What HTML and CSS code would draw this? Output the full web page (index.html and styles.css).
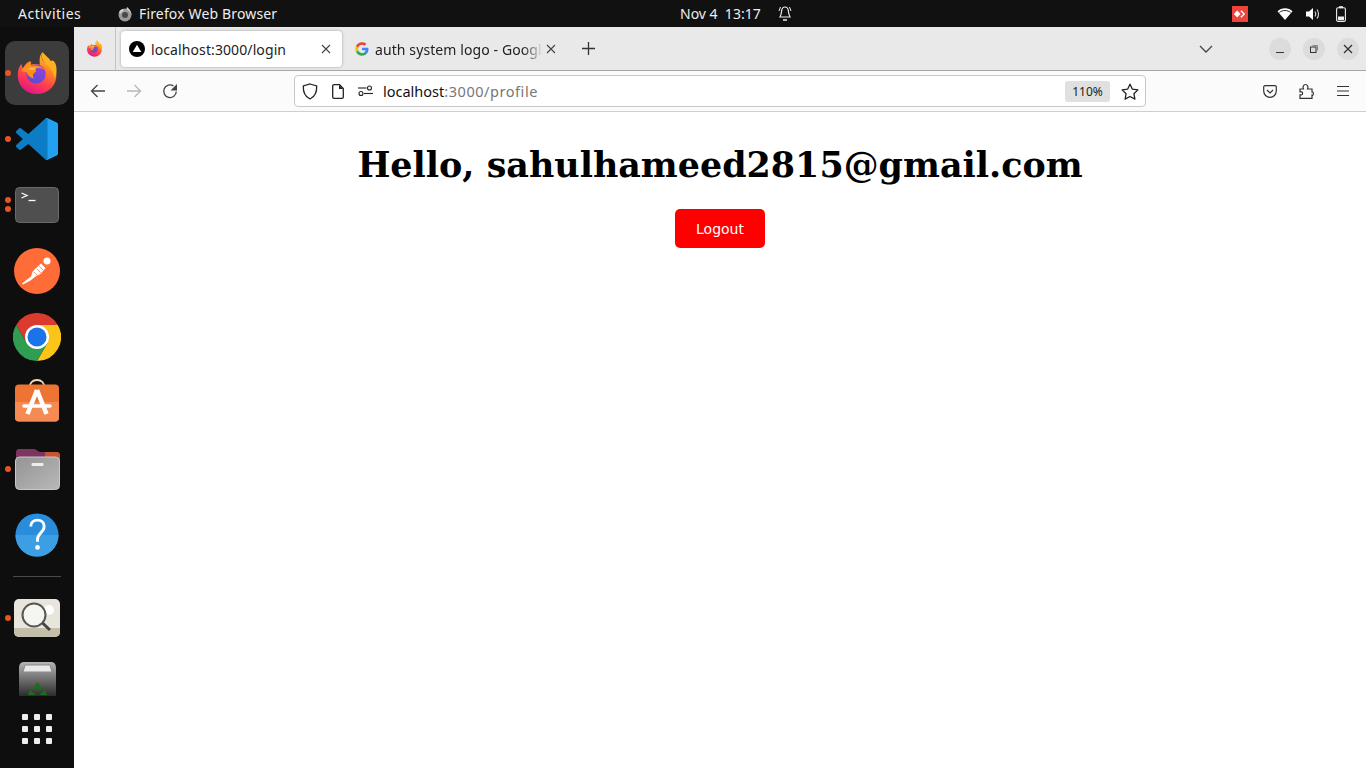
FILE: index.html
```html
<!DOCTYPE html>
<html>
  <head>
    <title>localhost:3000/profile</title>
    <link rel="stylesheet" href="styles.css">
  </head>

  <body>
    <svg class="defs" width="0" height="0">
      <defs>
        <linearGradient id="fxBase" x1="0.8" y1="0" x2="0.35" y2="1">
          <stop offset="0" stop-color="#ffd33a"/>
          <stop offset="0.35" stop-color="#ff8a1f"/>
          <stop offset="0.7" stop-color="#ff3d50"/>
          <stop offset="1" stop-color="#e31587"/>
        </linearGradient>
        <linearGradient id="fxPurple" x1="0.7" y1="0" x2="0.3" y2="1">
          <stop offset="0" stop-color="#9a3fe0"/>
          <stop offset="1" stop-color="#5b4bd0"/>
        </linearGradient>
        <symbol id="firefox" viewBox="0 0 48 48">
          <path fill="url(#fxBase)" d="M30 1c-2 5-1 9 3 12-1-1-2-1-3-2 0 0 2 1 3 2 3 1 5 0 6-1 5 5 7 11 6 17-1 10-10 18-21 18C12 47 3 38 3 27c0-5 1-9 4-13 0 2 1 4 2 5 1-3 4-7 8-8-1 2-1 3 0 4 3-1 7-1 10 0C27 10 26 6 30 1z"/>
          <path fill="#ffb01f" d="M30 1c-2 6 0 10 5 14 5 5 8 10 8 15 2-4 3-8 2-13-1-5-3-8-6-6-1-3-6-6-9-10z"/>
          <circle cx="23" cy="25" r="10.500" fill="url(#fxPurple)"/>
          <path fill="#ff8f1f" d="M7 22c2-5 8-10 11-10-1 2-1 3 0 4 6-1 12 1 15 5-4-3-9-3-11-1 2 2 1 3-1 4-2 1-2 4 0 6-5-1-8-4-8-7-2 0-4-1-6-1z"/>
          <path fill="#ffc23a" d="M13 20c3-2 6-3 10-1l-3 2c-2-1-4-1-7-1z"/>
        </symbol>
      </defs>
    </svg>

    <header class="topbar">
      <div class="top-left">
        <span class="activities">Activities</span>
        <span class="app-name">
          <svg class="top-fx" width="16" height="16" viewBox="0 0 16 16">
            <circle cx="8" cy="9" r="6.500" fill="#9b9b9b"/>
            <circle cx="8" cy="9" r="3" fill="#4a4a4a"/>
            <path fill="#d6d6d6" d="M10 1c-1 2 0 3 2 4 1 1 3 3 2 6 1-3 0-7-4-10zM2 6c1-2 3-3 4-3 0 1 0 1 1 2-2 0-3 1-3 3z"/>
          </svg>
          Firefox Web Browser
        </span>
      </div>
      <div class="clock">
        <span>Nov 4&nbsp;&nbsp;13:17</span>
        <svg class="bell" width="16" height="17" viewBox="0 0 16 17" fill="none" stroke="#eee" stroke-width="1.200">
          <path d="M8 2c-2.500 0-3.200 2-3.400 4-.2 3-.8 4.500-1.600 6h10c-.8-1.500-1.400-3-1.600-6C11.200 4 10.500 2 8 2z"/>
          <path d="M3.500 2 2 6M12.500 2 14 6" stroke-width="1"/>
          <path d="M6 15h4" stroke-width="1.500"/>
        </svg>
      </div>
      <div class="tray">
        <svg class="anydesk" width="16" height="16" viewBox="0 0 16 16">
          <rect width="16" height="16" fill="#ef443b"/>
          <path fill="#fff" d="M5.200 4.600 8.600 8 5.200 11.400 1.800 8z"/>
          <path fill="#fff" d="M9.400 4.200 13.200 8 9.400 11.800 8.400 10.800 11.200 8 8.400 5.200z"/>
        </svg>
        <svg class="wifi" width="16" height="14" viewBox="0 0 16 14">
          <path fill="#fff" d="M8 13 .5 4.200C2.500 2.400 5 1.200 8 1.200s5.500 1.200 7.500 3z"/>
          <path fill="none" stroke="#111" stroke-width=".9" d="M2.400 5.400C4 4.200 5.800 3.500 8 3.500s4 .7 5.600 1.900"/>
        </svg>
        <svg class="vol" width="16" height="16" viewBox="0 0 16 16">
          <path fill="#fff" d="M1 5.500h3L8 2v12l-4-3.500H1z"/>
          <path fill="none" stroke="#ddd" stroke-width="1.100" d="M10 5.500c1 1.500 1 3.500 0 5M12 3.500c2 2.500 2 6.500 0 9"/>
        </svg>
        <svg class="batt" width="10" height="16" viewBox="0 0 10 16">
          <rect x="3" y=".2" width="4" height="2" fill="#eee"/>
          <rect x=".6" y="1.700" width="8.800" height="13.700" rx="1.500" fill="none" stroke="#eee" stroke-width="1.100"/>
          <rect x="2" y="10.500" width="6" height="3.600" fill="#eee"/>
        </svg>
      </div>
    </header>

    <div class="desktop">
      <nav class="dock">
        <div class="dock-item active">
          <i class="dot"></i>
          <svg width="44" height="44"><use href="#firefox"/></svg>
        </div>

        <div class="dock-item">
          <i class="dot"></i>
          <svg width="42" height="42" viewBox="0 0 100 100">
            <path fill="#0c7dc4" d="M70.900 99.300a6.200 6.200 0 0 0 5-.2l20.600-9.900a6.300 6.300 0 0 0 3.500-5.600V16.400a6.300 6.300 0 0 0-3.500-5.600L75.900.9a6.200 6.200 0 0 0-7.100 1.200L29.400 38 12.200 25a4.200 4.200 0 0 0-5.300.2l-5.500 5a4.200 4.200 0 0 0 0 6.200L16.300 50 1.400 63.600a4.200 4.200 0 0 0 0 6.200l5.500 5a4.200 4.200 0 0 0 5.300.2l17.200-13 39.400 35.900a6.200 6.200 0 0 0 2.100 1.400zM75 27.300 45.100 50 75 72.700z"/>
            <path fill="#22a0f2" d="M68.800 2.100a6.200 6.200 0 0 1 7.100-1.200l20.600 9.900a6.300 6.300 0 0 1 3.500 5.600v67.200a6.300 6.300 0 0 1-3.500 5.600l-20.600 9.900a6.200 6.200 0 0 1-7.100-1.200c2.300 2.300 6.200.7 6.200-2.600V4.700c0-3.300-3.900-4.900-6.200-2.600z"/>
          </svg>
        </div>

        <div class="dock-item">
          <i class="dot dot-a"></i>
          <i class="dot dot-b"></i>
          <svg width="44" height="36" viewBox="0 0 44 36">
            <rect x=".5" y=".5" width="43" height="35" rx="4" fill="#4f4f4f" stroke="#6a6a6a"/>
            <path d="M6.500 6 12 8.500 6.500 11" fill="none" stroke="#fff" stroke-width="1.300"/>
            <path d="M13.500 13.500h7" stroke="#fff" stroke-width="1.300"/>
          </svg>
        </div>

        <div class="dock-item">
          <svg width="46" height="46" viewBox="0 0 46 46">
            <circle cx="23" cy="23" r="23" fill="#ff6c37"/>
            <circle cx="33" cy="13" r="3.500" fill="#fff"/>
            <path fill="#fff" d="M9 36.500l-1-1 9-7 1.500-5L27 15.500l4.500 4.500-5 6-5 2.500-5 4z"/>
            <path d="M20 24l4 4M23 21l4 4M25 18l4 4" stroke="#ff6c37" stroke-width=".7"/>
          </svg>
        </div>

        <div class="dock-item">
          <svg width="48" height="48" viewBox="0 0 48 48">
            <path fill="#db3a2f" d="M24 12h20.800A24 24 0 0 0 3.200 12l10.400 18z"/>
            <path fill="#fcc419" d="M24 12h20.800A24 24 0 0 1 24 48l10.400-18z"/>
            <path fill="#2f9e50" d="M3.200 12A24 24 0 0 0 24 48l10.400-18H13.600z"/>
            <circle cx="24" cy="24" r="12" fill="#fff"/>
            <circle cx="24" cy="24" r="9.500" fill="#1a73e8"/>
          </svg>
        </div>

        <div class="dock-item">
          <svg width="44" height="48" viewBox="0 0 44 48">
            <path d="M14.500 9c0-5 3-8 7.500-8s7.500 3 7.500 8" fill="none" stroke="#f3d9b0" stroke-width="1.800"/>
            <rect y="5.500" width="44" height="37" rx="4" fill="#ee7434"/>
            <path d="M0 23h44v15.500a4 4 0 0 1-4 4H4a4 4 0 0 1-4-4z" fill="#f58a52"/>
            <path d="M22 11 12.500 35M22 11l9.500 24" stroke="#fff" stroke-width="4.500" fill="none"/>
            <path d="M9 27h26" stroke="#fff" stroke-width="3.500" stroke-linecap="round"/>
          </svg>
        </div>

        <div class="dock-item">
          <i class="dot"></i>
          <svg width="45" height="41" viewBox="0 0 45 41">
            <defs>
              <linearGradient id="filesBody" x1="0" y1="0" x2="1" y2="1">
                <stop offset="0" stop-color="#949494"/>
                <stop offset="1" stop-color="#b8b8b8"/>
              </linearGradient>
            </defs>
            <path fill="#7d3560" d="M1 4c0-3 1-4 3-4h15c3 0 3 3 7 3h15c3 0 4 1 4 4v9H1z"/>
            <path fill="#c9552f" d="M30 3h11c3 0 4 1 4 4v9H30z"/>
            <rect x=".5" y="8" width="44" height="32.500" rx="4" fill="url(#filesBody)" stroke="#c9c9c9"/>
            <rect x="16.500" y="14" width="12" height="3" rx="1" fill="#eee"/>
          </svg>
        </div>

        <div class="dock-item">
          <svg width="44" height="44" viewBox="0 0 46 46">
            <circle cx="23" cy="23" r="22.500" fill="#2a8ddc"/>
            <path d="M.5 23a22.500 22.500 0 0 0 45 0z" fill="#3c9fe4"/>
            <path d="M16.500 14c0-4 3-6.500 7-6.500s7 2.500 7 6.500c0 6-7 7-7 14v2" fill="none" stroke="#fff" stroke-width="3"/>
            <circle cx="23.500" cy="36" r="2.500" fill="#fff"/>
          </svg>
        </div>

        <hr class="dock-sep">

        <div class="dock-item">
          <i class="dot"></i>
          <svg width="46" height="38" viewBox="0 0 46 38">
            <rect width="46" height="38" rx="5" fill="#e8e6dc"/>
            <path d="M0 29h46v4a5 5 0 0 1-5 5H5a5 5 0 0 1-5-5z" fill="#c4bfa8"/>
            <circle cx="35" cy="11" r="5" fill="#fff"/>
            <circle cx="20" cy="16" r="11.500" fill="#f5f5f2" stroke="#555" stroke-width="2"/>
            <path d="M28.500 24 36 31" stroke="#444" stroke-width="3"/>
          </svg>
        </div>

        <div class="dock-item dock-trash">
          <svg width="37" height="34" viewBox="0 0 37 34">
            <defs>
              <linearGradient id="trashBody" x1="0" y1="0" x2="0" y2="1">
                <stop offset="0" stop-color="#b5b5b5"/>
                <stop offset="1" stop-color="#2c2c2c"/>
              </linearGradient>
            </defs>
            <path d="M0 6c0-4 2-6 5-6h27c3 0 5 2 5 6v28H0z" fill="url(#trashBody)"/>
            <path d="M6 3h25l2 7H4z" fill="#e8e8e8" stroke="#8a8a8a"/>
            <path d="M18.500 20l-5 7h10zM11 28l-2 5h8zM26 28l2 5h-8z" fill="#1f6b1f"/>
          </svg>
        </div>

        <div class="app-grid">
          <i></i><i></i><i></i>
          <i></i><i></i><i></i>
          <i></i><i></i><i></i>
        </div>
      </nav>

      <div class="browser">
        <div class="tabbar">
          <div class="fx-view">
            <svg width="17" height="17"><use href="#firefox"/></svg>
          </div>

          <div class="tab tab-active">
            <svg class="favicon" width="16" height="16" viewBox="0 0 16 16">
              <circle cx="8" cy="8" r="8" fill="#000"/>
              <path d="M8 3.800 12.300 11H3.700z" fill="#fff"/>
            </svg>
            <span class="tab-title">localhost:3000/login</span>
            <svg class="tab-close" width="10" height="10" viewBox="0 0 10 10">
              <path d="M1 1l8 8M9 1l-8 8" stroke="#444" stroke-width="1.100"/>
            </svg>
          </div>

          <div class="tab tab-other">
            <svg class="favicon" width="14" height="14" viewBox="0 0 48 48">
              <path fill="#4285f4" d="M46 24.500c0-1.600-.1-3.100-.4-4.500H24v8.500h12.400c-.5 2.900-2.100 5.300-4.600 6.900v5.700h7.400c4.300-4 6.800-9.900 6.800-16.600z"/>
              <path fill="#34a853" d="M24 47c6.200 0 11.400-2 15.200-5.600l-7.400-5.700c-2 1.400-4.700 2.200-7.800 2.200-6 0-11.100-4-12.900-9.500H3.500v5.900C7.300 41.800 15 47 24 47z"/>
              <path fill="#fbbc05" d="M11.100 28.900c-.5-1.400-.7-3-.7-4.900s.3-3.400.7-4.900v-5.900H3.500C2 16.300 1 20 1 24s1 7.700 2.500 10.800z"/>
              <path fill="#ea4335" d="M24 9.600c3.400 0 6.400 1.200 8.800 3.400l6.600-6.600C35.400 2.800 30.200 1 24 1 15 1 7.300 6.200 3.500 13.200l7.600 5.900C12.900 13.600 18 9.600 24 9.600z"/>
            </svg>
            <span class="tab-title tab-fade">auth system logo - Google Search</span>
            <svg class="tab-close" width="10" height="10" viewBox="0 0 10 10">
              <path d="M1 1l8 8M9 1l-8 8" stroke="#444" stroke-width="1.100"/>
            </svg>
          </div>

          <svg class="new-tab" width="13" height="13" viewBox="0 0 13 13">
            <path d="M6.500 0v13M0 6.500h13" stroke="#333" stroke-width="1.300"/>
          </svg>

          <svg class="tab-list" width="14" height="8" viewBox="0 0 14 8" fill="none">
            <path d="M1 1l6 6 6-6" stroke="#444" stroke-width="1.300"/>
          </svg>

          <div class="win-btns">
            <span class="win-btn">
              <svg width="10" height="10" viewBox="0 0 10 10"><path d="M1 8.500h8" stroke="#333" stroke-width="1"/></svg>
            </span>
            <span class="win-btn">
              <svg width="10" height="10" viewBox="0 0 10 10" fill="none" stroke="#333">
                <rect x="1.500" y="3" width="5.500" height="5.500"/>
                <path d="M3.500 1.500h5v5" stroke="#888"/>
              </svg>
            </span>
            <span class="win-btn">
              <svg width="10" height="10" viewBox="0 0 10 10"><path d="M1 1l8 8M9 1l-8 8" stroke="#333" stroke-width="1.300"/></svg>
            </span>
          </div>
        </div>

        <div class="toolbar">
          <svg class="nav-back" width="16" height="14" viewBox="0 0 16 14" fill="none" stroke="#444" stroke-width="1.300">
            <path d="M15 7H1.500M7.500 1 1.500 7l6 6"/>
          </svg>
          <svg class="nav-fwd" width="16" height="14" viewBox="0 0 16 14" fill="none" stroke="#b8b8b8" stroke-width="1.300">
            <path d="M1 7h13.500M8.500 1l6 6-6 6"/>
          </svg>
          <svg class="nav-reload" width="16" height="16" viewBox="0 0 16 16" fill="none" stroke="#444" stroke-width="1.300">
            <path d="M14.300 8.500A6.300 6.300 0 1 1 11.500 3"/>
            <path d="M15 1v6.500H8.500z" fill="#444" stroke="none"/>
          </svg>

          <div class="urlbar">
            <svg class="url-shield" width="16" height="17" viewBox="0 0 16 17" fill="none" stroke="#222" stroke-width="1.300">
              <path d="M8 1 14.700 3c.3 6.500-1.500 10.500-6.700 13C2.800 13.500 1 9.500 1.300 3z"/>
            </svg>
            <svg class="url-page" width="12" height="15" viewBox="0 0 12 15" fill="none" stroke="#222" stroke-width="1.300">
              <path d="M2 .7h5.500l3.800 3.800V13a1.300 1.300 0 0 1-1.300 1.300H2A1.300 1.300 0 0 1 .7 13V2A1.300 1.300 0 0 1 2 .7z"/>
              <path d="M7 1v4h4" fill="#222" stroke="none"/>
            </svg>
            <svg class="url-perm" width="15" height="12" viewBox="0 0 15 12" fill="none" stroke="#222" stroke-width="1.100">
              <circle cx="11.500" cy="3" r="2"/>
              <path d="M0 3h8.500"/>
              <circle cx="3" cy="8.500" r="2"/>
              <path d="M6 8.500h9"/>
            </svg>
            <span class="url-text">localhost<span class="url-rest">:3000/profile</span></span>
            <span class="zoom-pill">110%</span>
            <svg class="url-star" width="18" height="17" viewBox="0 0 18 17" fill="none" stroke="#222" stroke-width="1.300">
              <path d="M9 1.200l2.400 5 5.500.7-4 3.800 1 5.400L9 13.500l-4.900 2.600 1-5.400-4-3.800 5.500-.7z" stroke-linejoin="round"/>
            </svg>
          </div>

          <div class="tool-btns">
            <svg width="14" height="13" viewBox="0 0 14 13" fill="none" stroke="#333" stroke-width="1.200">
              <path d="M2 .7h10A1.300 1.300 0 0 1 13.300 2v4a6.300 6.300 0 0 1-12.600 0V2A1.300 1.300 0 0 1 2 .7z"/>
              <path d="M4 5l3 3 3-3"/>
            </svg>
            <svg width="15" height="16" viewBox="0 0 15 16" fill="none" stroke="#333" stroke-width="1.200">
              <path d="M1 6h3.500c-1-2 0-4.500 2-4.500S9.500 4 8.500 6H13v3c1.500-.5 1.500 2 1 3s-1 .5-1 .5v2.800H1v-3.500h1.500c1.500 0 1.500-3 0-3H1z"/>
            </svg>
            <svg width="14" height="12" viewBox="0 0 14 12" stroke="#333" stroke-width="1.200">
              <path d="M1 1.500h12M1 6h12M1 10.500h12"/>
            </svg>
          </div>
        </div>

        <main class="page">
          <h1>Hello, sahulhameed2815@gmail.com</h1>
          <button class="logout">Logout</button>
        </main>
      </div>
    </div>
  </body>
</html>
```

FILE: styles.css
```css
html,
body {
  height: 100%;
}
body {
  margin: 0;
  display: flex;
  flex-direction: column;
  overflow: hidden;
  font-family: "Noto Sans", sans-serif;
  background: white;
}
svg {
  display: block;
  flex: none;
}
.defs {
  position: absolute;
}

/* gnome top bar */
.topbar {
  height: 27px;
  flex: none;
  display: flex;
  align-items: center;
  background: #111;
  color: #eee;
  font-size: 14px;
}
.top-left {
  width: 680px;
  flex: none;
  display: flex;
  align-items: center;
}
.activities {
  margin-left: 18px;
  width: 99px;
  letter-spacing: 0.5px;
}
.app-name {
  display: flex;
  align-items: center;
  gap: 6px;
  letter-spacing: 0.15px;
}
.clock {
  display: flex;
  align-items: center;
  gap: 16px;
}
.tray {
  margin-left: auto;
  display: flex;
  align-items: center;
  margin-right: 20px;
}
.anydesk {
  margin-right: 29px;
}
.wifi {
  margin-right: 12px;
}
.vol {
  margin-right: 15px;
}

.desktop {
  flex: 1;
  display: flex;
  min-height: 0;
}

/* dock */
.dock {
  width: 74px;
  flex: none;
  padding-top: 13px;
  box-sizing: border-box;
  background: #0e0e0e;
  display: flex;
  flex-direction: column;
  align-items: center;
}
.dock-item {
  position: relative;
  width: 64px;
  height: 66px;
  flex: none;
  display: flex;
  align-items: center;
  justify-content: center;
}
.dock-item.active::before {
  content: "";
  position: absolute;
  inset: 1px 0;
  border-radius: 10px;
  background: #3c3c3c;
}
.dock-item svg {
  position: relative;
}
.dot {
  position: absolute;
  left: 0;
  top: 30px;
  width: 6px;
  height: 6px;
  border-radius: 50%;
  background: #e95420;
}
.dot-a {
  top: 25px;
}
.dot-b {
  top: 34px;
}
.dock-sep {
  width: 48px;
  margin: 8px 0;
  border: 0;
  border-top: 1px solid #4a4a4a;
}
.dock-trash {
  height: 56px;
}
.app-grid {
  margin-top: 7px;
  display: grid;
  grid-template-columns: repeat(3, 6px);
  gap: 6px;
}
.app-grid i {
  height: 6px;
  border-radius: 1px;
  background: #eee;
}

/* firefox chrome */
.browser {
  flex: 1;
  min-width: 0;
  display: flex;
  flex-direction: column;
}
.tabbar {
  height: 44px;
  flex: none;
  box-sizing: border-box;
  display: flex;
  align-items: center;
  background: #e9e9e9;
  border-bottom: 1px solid #a8a8a8;
  font-size: 14px;
  color: #222;
}
.fx-view {
  width: 42px;
  height: 100%;
  box-sizing: border-box;
  border-right: 1px solid #c4c4c4;
  display: flex;
  align-items: center;
  justify-content: center;
}
.tab {
  display: flex;
  align-items: center;
  height: 36px;
  box-sizing: border-box;
}
.tab-active {
  width: 221px;
  margin-left: 5px;
  padding: 0 11px 0 8px;
  background: white;
  border-radius: 4px;
  box-shadow: 0 0 3px rgba(0, 0, 0, 0.3);
}
.tab-other {
  width: 218px;
  padding: 0 4px 0 13px;
}
.tab-title {
  margin-left: 6px;
  padding-top: 1px;
  flex: 1;
  min-width: 0;
  white-space: nowrap;
  overflow: hidden;
  letter-spacing: 0.1px;
}
.tab-fade {
  -webkit-mask-image: linear-gradient(to right, black 88%, transparent);
  mask-image: linear-gradient(to right, black 88%, transparent);
}
.tab-close {
  margin-left: 3px;
}
.new-tab {
  margin-left: 22px;
}
.tab-list {
  margin-left: 604px;
}
.win-btns {
  margin-left: 56px;
  display: flex;
  gap: 12px;
}
.win-btn {
  width: 22px;
  height: 22px;
  border-radius: 50%;
  background: #dcdcdc;
  display: flex;
  align-items: center;
  justify-content: center;
}

.toolbar {
  height: 41px;
  flex: none;
  display: flex;
  align-items: center;
  box-sizing: border-box;
  background: #fbfbfb;
  border-bottom: 1px solid #cfcfcf;
}
.nav-back {
  margin-left: 16px;
}
.nav-fwd {
  margin-left: 20px;
}
.nav-reload {
  margin-left: 20px;
}
.urlbar {
  width: 852px;
  height: 32px;
  margin-left: 116px;
  box-sizing: border-box;
  display: flex;
  align-items: center;
  background: white;
  border: 1px solid #c8c8c8;
  border-radius: 4px;
  font-size: 14.500px;
  color: #111;
}
.url-shield {
  margin-left: 7px;
}
.url-page {
  margin-left: 14px;
}
.url-perm {
  margin-left: 14px;
}
.url-text {
  margin-left: 10px;
}
.url-rest {
  color: #777;
  letter-spacing: 0.55px;
}
.zoom-pill {
  margin-left: auto;
  width: 45px;
  height: 21px;
  border-radius: 3px;
  background: #e0e0e0;
  font-size: 12px;
  line-height: 21px;
  text-align: center;
  color: #222;
}
.url-star {
  margin: 0 6px 0 11px;
}
.tool-btns {
  margin-left: 117px;
  display: flex;
  align-items: center;
  gap: 22px;
}

/* the page itself */
.page {
  flex: 1;
  text-align: center;
  background: white;
}
h1 {
  margin: 32px 0 23px;
  font-family: "DejaVu Serif", serif;
  font-size: 34.900px;
  line-height: 42px;
  font-weight: bold;
  color: black;
}
.logout {
  width: 90px;
  height: 39px;
  padding: 0;
  border: 0;
  border-radius: 5px;
  background: red;
  color: white;
  font-family: "DejaVu Sans", sans-serif;
  font-size: 14px;
  cursor: pointer;
}
```
